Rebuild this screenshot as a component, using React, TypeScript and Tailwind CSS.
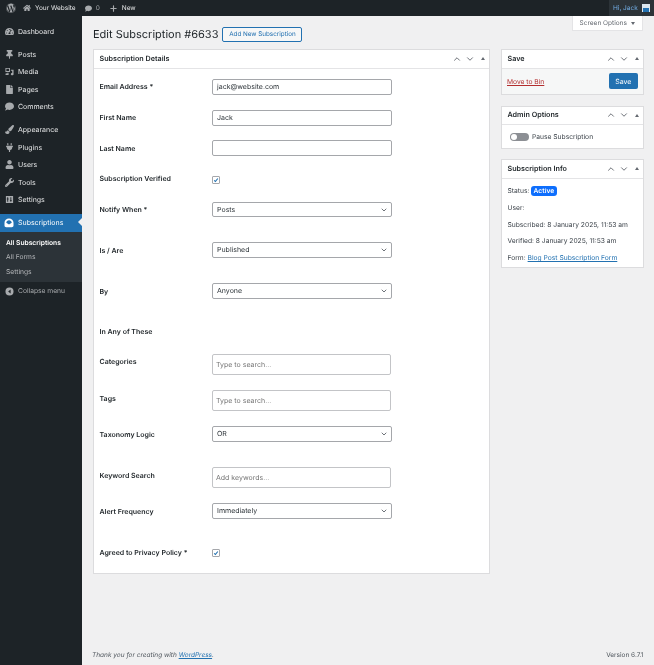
import { ChevronDown, ChevronUp, Plus } from 'lucide-react';
import {
  FaComment,
  FaFile,
  FaHome,
  FaPaintBrush,
  FaPlug,
  FaThumbtack,
  FaTachometerAlt,
  FaUser,
  FaWordpress,
  FaWrench,
} from 'react-icons/fa';
import type { ReactNode } from 'react';

const iconClass = 'w-[9px] h-[9px] text-[#a7aaad] shrink-0';

function MediaIcon() {
  return (
    <svg viewBox="0 0 20 20" className={iconClass} fill="currentColor">
      <path d="M1 2h10v9H1zM3 4v5h6V4z" fillRule="evenodd" />
      <path d="M13 6h6v10c0 1.500-1.300 2.500-3 2.500s-3-1-3-2.500 1.300-2.500 3-2.500v-5h-3zM5 13h3v5H3c-1.200 0-2-.8-2-2s.8-2 2-2 2 .8 2 1z" />
    </svg>
  );
}

function SettingsIcon() {
  return (
    <svg viewBox="0 0 20 20" className={iconClass} fill="currentColor">
      <path
        d="M2 2h16v16H2zM5 5v3H4v2h1v5h2v-5h1V8H7V5zM12 5v6h-1v2h1v2h2v-2h1v-2h-1V5z"
        fillRule="evenodd"
      />
    </svg>
  );
}

function SubscriptionsIcon() {
  return (
    <svg viewBox="0 0 20 20" className="w-[10px] h-[10px] text-white shrink-0" fill="currentColor">
      <path
        d="M10 1c5 0 9 3.500 9 8.500V15c0 2-1.500 3.500-3.500 3.500h-11C2.500 18.500 1 17 1 15V9.500C1 4.500 5 1 10 1zM10 4.500c-3 0-5.200 2-5.500 4.800L10 13l5.500-3.700C15.200 6.500 13 4.500 10 4.500z"
        fillRule="evenodd"
      />
    </svg>
  );
}

function CollapseIcon() {
  return (
    <svg viewBox="0 0 20 20" className={iconClass} fill="currentColor">
      <path d="M10 1a9 9 0 1 1 0 18 9 9 0 0 1 0-18zM12.500 5.500 7 10l5.500 4.500z" fillRule="evenodd" />
    </svg>
  );
}

function MenuItem({ icon, label }: { icon: ReactNode; label: string }) {
  return (
    <div className="h-[17.500px] flex items-center pl-[4px] gap-[4px] text-[#e4e5e6]">
      <span className="w-[10px] flex justify-center">{icon}</span>
      <span className="pt-[1px]">{label}</span>
    </div>
  );
}

function Sidebar() {
  return (
    <aside className="w-[82px] shrink-0 bg-[#1d2327] text-[7px] pt-[6.500px] flex flex-col">
      <MenuItem icon={<FaTachometerAlt className={iconClass} />} label="Dashboard" />
      <div className="h-[5.500px]" />
      <MenuItem icon={<FaThumbtack className={iconClass} />} label="Posts" />
      <MenuItem icon={<MediaIcon />} label="Media" />
      <MenuItem icon={<FaFile className={iconClass} />} label="Pages" />
      <MenuItem icon={<FaComment className={iconClass} />} label="Comments" />
      <div className="h-[5.500px]" />
      <MenuItem icon={<FaPaintBrush className={iconClass} />} label="Appearance" />
      <MenuItem icon={<FaPlug className={iconClass} />} label="Plugins" />
      <MenuItem icon={<FaUser className={iconClass} />} label="Users" />
      <MenuItem icon={<FaWrench className={iconClass} />} label="Tools" />
      <MenuItem icon={<SettingsIcon />} label="Settings" />
      <div className="h-[5.500px]" />
      <div className="relative h-[17.500px] bg-[#2271b1] text-white flex items-center pl-[4px] gap-[4px]">
        <span className="w-[10px] flex justify-center">
          <SubscriptionsIcon />
        </span>
        <span className="pt-[1px]">Subscriptions</span>
        <span className="absolute right-0 top-[4px] border-y-[4.500px] border-y-transparent border-r-[4.500px] border-r-[#f0f0f1]" />
      </div>
      <div className="bg-[#2c3338] h-[50.500px] pt-[4.500px] pl-[6px] text-[6.700px] text-[#b4b6b9]">
        <div className="h-[14.300px] flex items-center text-white font-semibold">All Subscriptions</div>
        <div className="h-[14.300px] flex items-center">All Forms</div>
        <div className="h-[14.300px] flex items-center">Settings</div>
      </div>
      <div className="h-[18px] flex items-center pl-[4px] gap-[4px] text-[#a7aaad] text-[6.700px]">
        <span className="w-[10px] flex justify-center">
          <CollapseIcon />
        </span>
        <span className="pt-[1px]">Collapse menu</span>
      </div>
    </aside>
  );
}

function AdminBar() {
  return (
    <header className="h-4 shrink-0 bg-[#1d2327] text-[#e4e5e6] text-[6.500px] flex items-center">
      <div className="w-[22px] flex justify-center">
        <FaWordpress className="w-[10px] h-[10px] text-[#a7aaad]" />
      </div>
      <FaHome className="w-[8px] h-[8px] text-[#a7aaad] ml-[1px]" />
      <span className="ml-[4px] pt-[1px]">Your Website</span>
      <FaComment className="w-[7px] h-[7px] text-[#a7aaad] ml-[9px]" />
      <span className="ml-[4px] pt-[1px] text-[#a7aaad]">0</span>
      <Plus className="w-[9px] h-[9px] text-[#a7aaad] ml-[9px]" strokeWidth={3} />
      <span className="ml-[4px] pt-[1px]">New</span>
      <div className="ml-auto h-full w-[45px] bg-[#2c3338] flex items-center pl-[4px] gap-[4px] text-[#72aee6]">
        <span className="pt-[1px]">Hi, Jack</span>
        <span className="w-[8px] h-[8px] bg-[#dbe6ee] flex items-end justify-center">
          <span className="w-[6px] h-[4px] bg-[#2271b1]" />
        </span>
      </div>
    </header>
  );
}

function BoxControls() {
  return (
    <div className="ml-auto flex items-center gap-[3px] text-[#646970]">
      <ChevronUp className="w-[10px] h-[10px]" strokeWidth={2.250} />
      <ChevronDown className="w-[10px] h-[10px]" strokeWidth={2.250} />
      <span className="ml-[3px] border-x-[2.500px] border-x-transparent border-b-[3px] border-b-[#646970]" />
    </div>
  );
}

function Box({ title, children }: { title: string; children: ReactNode }) {
  return (
    <section className="bg-white border border-[#dcdcde]">
      <div className="h-[18.500px] flex items-center pl-[5.500px] pr-[4px] border-b border-[#e4e4e6] text-[7.200px] font-semibold text-[#1d2327]">
        <span className="pt-[1px]">{title}</span>
        <BoxControls />
      </div>
      {children}
    </section>
  );
}

function Row({ label, height, children }: { label: string; height: string; children?: ReactNode }) {
  return (
    <div className={`flex items-start ${height}`}>
      <div className="w-[112.500px] shrink-0 h-[16px] pt-[1px] flex items-center text-[7px] font-semibold text-[#1d2327]">
        {label}
      </div>
      {children}
    </div>
  );
}

function TextField({ value }: { value?: string }) {
  return (
    <div className="w-[179.500px] h-[16px] pt-[1px] bg-white border border-[#a5a7ab] rounded-[2px] flex items-center px-[4px] text-[7px] text-[#2c3338]">
      {value}
    </div>
  );
}

function SearchField({ placeholder }: { placeholder: string }) {
  return (
    <div className="w-[178.500px] h-[21px] pt-[1px] bg-white border border-[#c3c4c7] rounded-[2px] flex items-center px-[3px] text-[7px] text-[#757575]">
      {placeholder}
    </div>
  );
}

function SelectField({ value }: { value: string }) {
  return (
    <div className="w-[179.500px] h-[15.500px] bg-white border border-[#a5a7ab] rounded-[2px] flex items-center pl-[4px] pr-[3px] text-[7px] text-[#2c3338]">
      <span className="pt-[1px]">{value}</span>
      <ChevronDown className="ml-auto w-[8px] h-[8px] text-[#50575e]" strokeWidth={2.500} />
    </div>
  );
}

function Check({ className }: { className: string }) {
  return (
    <div className={`w-[8px] h-[8px] bg-white border border-[#a5a7ab] rounded-[1px] flex items-center justify-center ${className}`}>
      <svg viewBox="0 0 10 10" className="w-[8px] h-[8px] text-[#2271b1]" fill="none" stroke="currentColor" strokeWidth="1.800">
        <path d="M2 5.500l2 2 4-5" />
      </svg>
    </div>
  );
}

function SubscriptionForm() {
  return (
    <div className="pt-[10.500px] pl-[5.500px] h-[504px]">
      <Row label="Email Address *" height="h-[30.700px]">
        <TextField value="jack@website.com" />
      </Row>
      <Row label="First Name" height="h-[30.700px]">
        <TextField value="Jack" />
      </Row>
      <Row label="Last Name" height="h-[30.700px]">
        <TextField />
      </Row>
      <Row label="Subscription Verified" height="h-[30.700px]">
        <Check className="mt-[4.500px]" />
      </Row>
      <Row label="Notify When *" height="h-[40.500px]">
        <SelectField value="Posts" />
      </Row>
      <Row label="Is / Are" height="h-[41px]">
        <SelectField value="Published" />
      </Row>
      <Row label="By" height="h-[40.500px]">
        <SelectField value="Anyone" />
      </Row>
      <Row label="In Any of These" height="h-[30px]" />
      <Row label="Categories" height="h-[36.500px]">
        <SearchField placeholder="Type to search..." />
      </Row>
      <Row label="Tags" height="h-[36px]">
        <SearchField placeholder="Type to search..." />
      </Row>
      <Row label="Taxonomy Logic" height="h-[41px]">
        <SelectField value="OR" />
      </Row>
      <Row label="Keyword Search" height="h-[36px]">
        <SearchField placeholder="Add keywords..." />
      </Row>
      <Row label="Alert Frequency" height="h-[41px]">
        <SelectField value="Immediately" />
      </Row>
      <Row label="Agreed to Privacy Policy *" height="h-[20px]">
        <Check className="mt-[4.500px]" />
      </Row>
    </div>
  );
}

function SidePanels() {
  return (
    <div className="w-[142.500px] shrink-0 flex flex-col gap-[10.500px] text-[6.700px] text-[#3c434a]">
      <Box title="Save">
        <div className="h-[25.500px] bg-[#f6f7f7] flex items-center justify-between pl-[5px] pr-[5px]">
          <span className="pt-[1px] text-[#b32d2e] underline">Move to Bin</span>
          <span className="w-[28.500px] h-[16px] pt-[1px] bg-[#2271b1] rounded-[2px] text-white text-[7px] flex items-center justify-center">
            Save
          </span>
        </div>
      </Box>
      <Box title="Admin Options">
        <div className="h-[22.500px] pt-[1px] flex items-center pl-[8px] gap-[3px]">
          <span className="w-[19px] h-[8px] rounded-full bg-[#8c8f94] p-[1px]">
            <span className="block w-[6px] h-[6px] rounded-full bg-white" />
          </span>
          <span>Pause Subscription</span>
        </div>
      </Box>
      <Box title="Subscription Info">
        <div className="h-[88px] pt-[4.500px] pl-[5.500px] flex flex-col">
          <div className="h-[16.700px] flex items-center gap-[1.500px]">
            Status:
            <span className="h-[10px] w-[26px] bg-[#0d6efd] rounded-[3px] text-white font-semibold flex items-center justify-center">
              Active
            </span>
          </div>
          <div className="h-[16.700px] flex items-center">User:</div>
          <div className="h-[16.700px] flex items-center">Subscribed: 8 January 2025, 11:53 am</div>
          <div className="h-[16.700px] flex items-center">Verified: 8 January 2025, 11:53 am</div>
          <div className="h-[16.700px] flex items-center gap-[2px]">
            Form: <span className="text-[#2271b1] underline">Blog Post Subscription Form</span>
          </div>
        </div>
      </Box>
    </div>
  );
}

export default function App() {
  return (
    <div className="relative w-[654px] h-[665px] overflow-hidden bg-[#f0f0f1] flex flex-col whitespace-nowrap blur-[0.35px] [text-rendering:geometricPrecision] font-['Inter',sans-serif]">
      <AdminBar />
      <div className="flex flex-1 min-h-0">
        <Sidebar />
        <main className="relative flex-1 flex flex-col pl-[11px] pr-[10.500px]">
          <div className="absolute top-0 right-[11px] w-[71.500px] h-[15px] pt-[1px] bg-white border border-[#e4e4e6] border-t-0 flex items-center justify-center gap-[4px] text-[6.500px] text-[#646970]">
            Screen Options
            <span className="border-x-[2.500px] border-x-transparent border-t-[3px] border-t-[#646970]" />
          </div>
          <div className="h-[33px] flex items-end pb-[7.500px] gap-[4px]">
            <h1 className="text-[11px] leading-[15px] text-[#1d2327]">Edit Subscription #6633</h1>
            <span className="w-[80px] h-[15px] pt-[1px] bg-[#f6f7f7] border border-[#2271b1] rounded-[2px] text-[#2271b1] text-[6.300px] flex items-center justify-center">
              Add New Subscription
            </span>
          </div>
          <div className="flex gap-[11px] items-start">
            <div className="w-[397px] shrink-0">
              <Box title="Subscription Details">
                <SubscriptionForm />
              </Box>
            </div>
            <SidePanels />
          </div>
          <footer className="mt-auto -ml-[1px] h-[14px] flex justify-between text-[6.500px] text-[#50575e]">
            <span className="italic">
              Thank you for creating with <span className="text-[#2271b1] underline">WordPress</span>.
            </span>
            <span>Version 6.7.1</span>
          </footer>
        </main>
      </div>
    </div>
  );
}
